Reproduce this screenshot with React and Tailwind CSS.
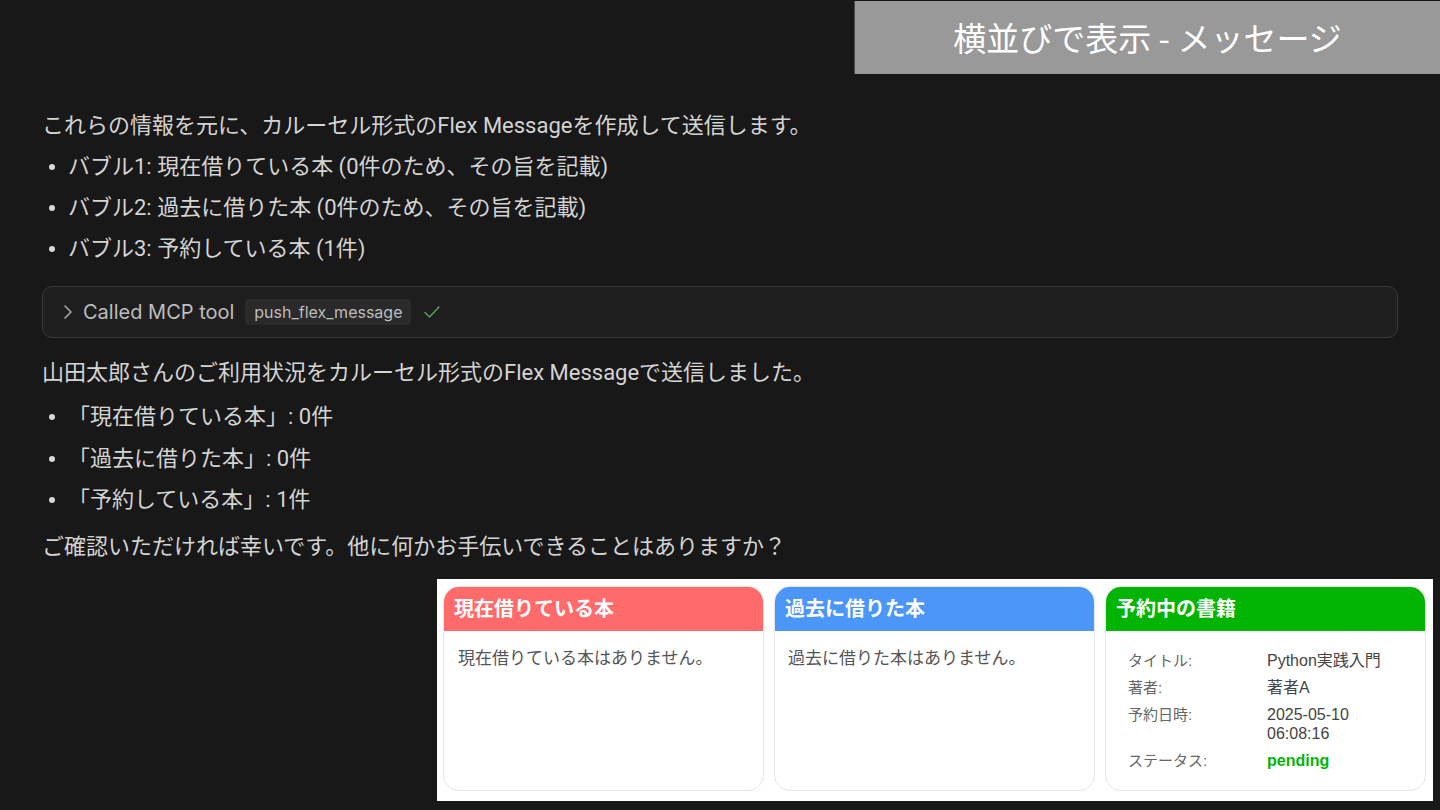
import React from 'react';

const chatFont = { fontFamily: 'Roboto, "Noto Sans CJK JP", sans-serif' };
const cardFont = { fontFamily: '"Liberation Sans", "Noto Sans CJK JP", sans-serif' };

function Bullet({ children }) {
  return (
    <div className="flex items-center h-[41px]">
      <div className="w-[26px] flex">
        <span className="ml-[7px] w-[6px] h-[6px] rounded-full bg-[#d8d8d8]" />
      </div>
      <span>{children}</span>
    </div>
  );
}

function Card({ title, color, children }) {
  return (
    <div className="w-[321px] h-[205px] rounded-[16px] border border-[#e6e6e6] overflow-hidden bg-white flex flex-col">
      <div
        className={`h-[44px] flex items-center px-[10px] text-white font-bold text-[20px] ${color}`}
      >
        {title}
      </div>
      <div className="flex-1">{children}</div>
    </div>
  );
}

function Row({ label, value, valueClass = 'text-[#444] text-[16px]' }) {
  return (
    <div className="flex leading-[19px]">
      <div className="w-[139px] text-[#666]">{label}</div>
      <div className={`w-[120px] ${valueClass}`}>{value}</div>
    </div>
  );
}

export default function App() {
  return (
    <div className="w-[1440px] h-[810px] bg-[#181818] overflow-hidden flex flex-col">
      {/* slide title */}
      <div className="flex justify-end">
        <div
          className="w-[586px] h-[73px] mt-[1px] bg-[#999999] border-l border-[#4a4a4a] flex items-center justify-center text-white text-[33px]"
          style={{ fontFamily: '"Noto Sans CJK JP", sans-serif' }}
        >
          横並びで表示 - メッセージ
        </div>
      </div>

      {/* chat output */}
      <div className="px-[42px] mt-[31px] text-[22px] text-[#d4d4d4]" style={chatFont}>
        <div className="h-[41px] flex items-center">
          これらの情報を元に、カルーセル形式のFlex Messageを作成して送信します。
        </div>
        <Bullet>バブル1: 現在借りている本 (0件のため、その旨を記載)</Bullet>
        <Bullet>バブル2: 過去に借りた本 (0件のため、その旨を記載)</Bullet>
        <Bullet>バブル3: 予約している本 (1件)</Bullet>

        <div className="mt-[17px] h-[52px] rounded-[10px] border border-[#383838] bg-[#1e1e1e] flex items-center pl-[19px]">
          <svg width="12" height="16" viewBox="0 0 12 16" fill="none" className="mr-[9px]">
            <path d="M3 2l6 6-6 6" stroke="#a8a8a8" strokeWidth="1.6" strokeLinecap="round" strokeLinejoin="round" />
          </svg>
          <span className="text-[20px] text-[#bdbdbd]" style={{ fontFamily: 'Inter, sans-serif' }}>
            Called MCP tool
          </span>
          <span
            className="ml-[11px] h-[26px] px-[9px] rounded-[4px] bg-[#2a2a2a] text-[16px] text-[#bdbdbd] flex items-center"
            style={{ fontFamily: 'Inter, sans-serif' }}
          >
            push_flex_message
          </span>
          <svg width="20" height="16" viewBox="0 0 20 16" fill="none" className="ml-[11px]">
            <path d="M3 8.5l4.5 4.5L17 3" stroke="#5f9a5f" strokeWidth="1.5" strokeLinecap="round" strokeLinejoin="round" />
          </svg>
        </div>

        <div className="mt-[14px] h-[41px] flex items-center">
          山田太郎さんのご利用状況をカルーセル形式のFlex Messageで送信しました。
        </div>
        <div className="mt-[3px]">
          <Bullet>「現在借りている本」: 0件</Bullet>
        </div>
        <div className="mt-[1px]">
          <Bullet>「過去に借りた本」: 0件</Bullet>
        </div>
        <Bullet>「予約している本」: 1件</Bullet>
        <div className="mt-[6px] h-[41px] flex items-center">
          ご確認いただければ幸いです。他に何かお手伝いできることはありますか？
        </div>
      </div>

      {/* flex message carousel capture */}
      <div
        className="ml-[437px] mt-[12px] w-[996px] h-[222px] bg-white flex gap-[10px] pl-[6px] pt-[7px]"
        style={cardFont}
      >
        <Card title="現在借りている本" color="bg-[#ff6b6b]">
          <div className="pt-[15px] px-[14px] text-[17px] text-[#555]">現在借りている本はありません。</div>
        </Card>
        <Card title="過去に借りた本" color="bg-[#4b96f7]">
          <div className="pt-[15px] px-[13px] text-[17px] text-[#555]">過去に借りた本はありません。</div>
        </Card>
        <Card title="予約中の書籍" color="bg-[#03b403]">
          <div className="pt-[20px] px-[22px] text-[15px] flex flex-col gap-[8px]">
            <Row label="タイトル:" value="Python実践入門" />
            <Row label="著者:" value="著者A" />
            <Row label="予約日時:" value="2025-05-10 06:08:16" />
            <Row label="ステータス:" value="pending" valueClass="text-[#03b403] font-bold text-[16px]" />
          </div>
        </Card>
      </div>
    </div>
  );
}
